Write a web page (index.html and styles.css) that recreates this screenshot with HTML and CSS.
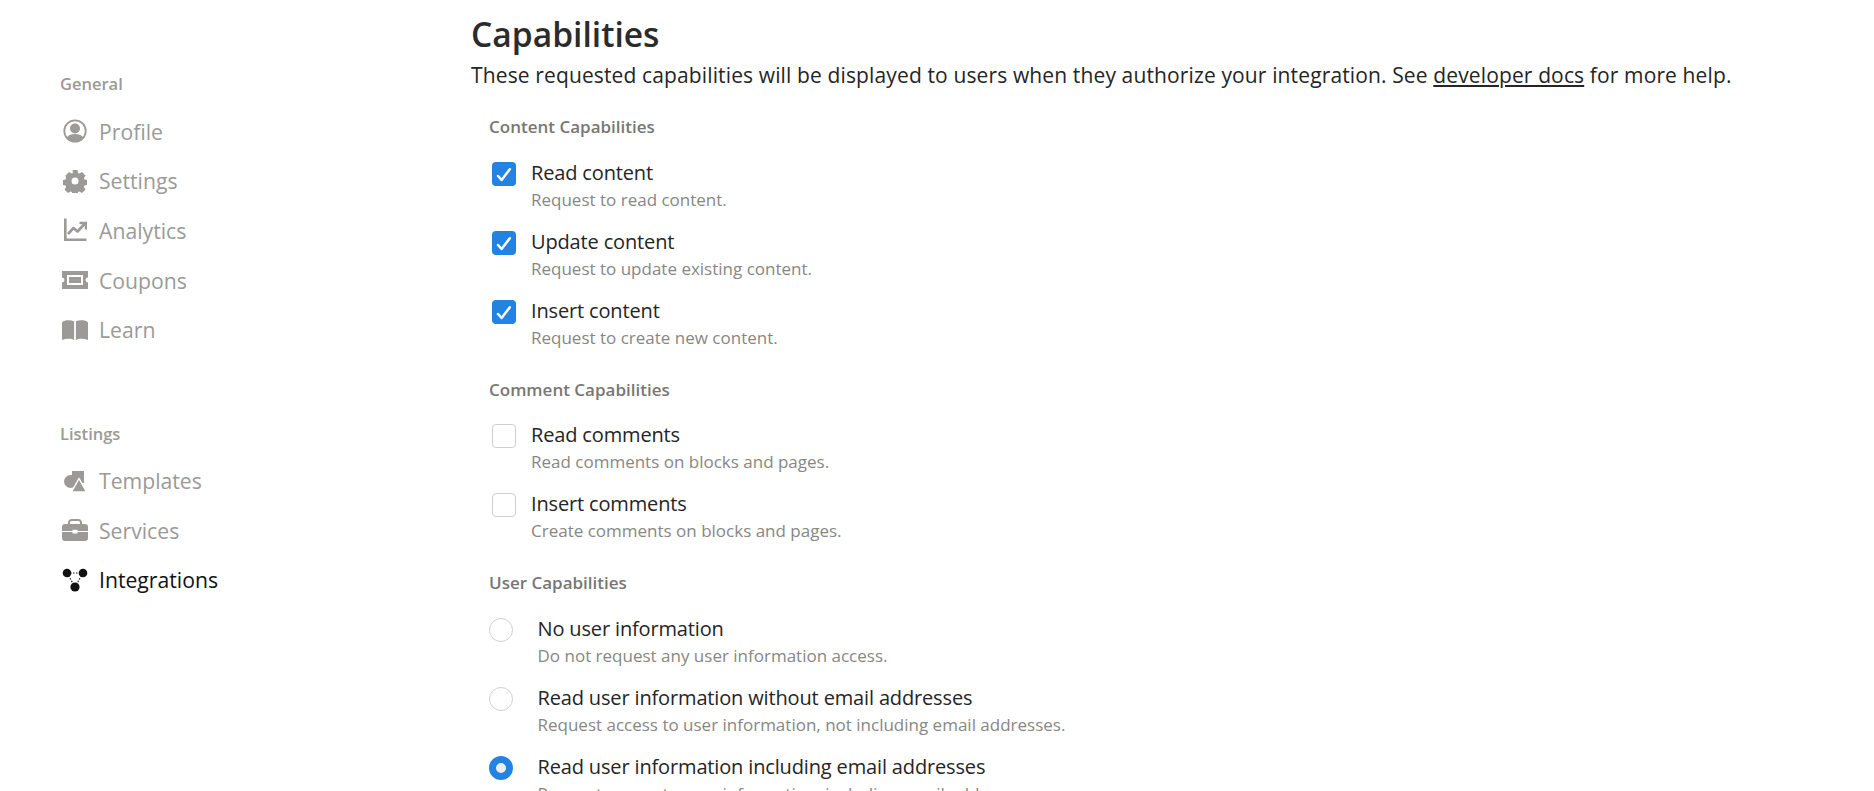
FILE: index.html
```html
<!DOCTYPE html>
<html lang="en">
<head>
<meta charset="utf-8">
<title>Capabilities</title>
<link rel="stylesheet" href="styles.css">
</head>
<body>
<div class="page">
  <aside class="sidebar">
    <div class="nav-title">General</div>
    <nav class="nav-list">
      <a class="nav-item"><svg class="nav-icon" viewBox="0 0 24 24"><circle cx="12" cy="12" r="10.700" fill="none" stroke="currentColor" stroke-width="1.800"/><circle cx="12" cy="9.500" r="5" fill="currentColor"/><path fill="currentColor" d="M3.800 18.500C5.500 15.800 8.500 15 12 15s6.500.8 8.200 3.500A10.500 10.500 0 0 1 12 22.500a10.500 10.500 0 0 1-8.200-4z"/></svg>Profile</a>
      <a class="nav-item"><svg class="nav-icon" viewBox="0 0 24 24"><path fill="currentColor" fill-rule="evenodd" d="M9.500 1h5l.6 3 1.300.6 2.600-1.600 3.500 3.500-1.600 2.600.6 1.300 3 .6v5l-3 .6-.6 1.300 1.600 2.600-3.500 3.500-2.600-1.600-1.300.6-.6 3h-5l-.6-3-1.300-.6-2.600 1.600-3.500-3.500 1.600-2.600-.6-1.300-3-.6v-5l3-.6.6-1.300L2.500 6.500 6 3l2.600 1.600 1.300-.6zM12 8.500a3.500 3.500 0 1 0 0 7 3.500 3.500 0 0 0 0-7z"/></svg>Settings</a>
      <a class="nav-item"><svg class="nav-icon" viewBox="0 0 24 24"><path fill="none" stroke="currentColor" stroke-width="2.600" d="M2.300 .5V21.700h21.200"/><path fill="none" stroke="currentColor" stroke-width="2.600" stroke-linejoin="round" d="M5 16l5.500-6 4 3.500 7.500-8"/><path fill="none" stroke="currentColor" stroke-width="2.400" d="M16.500 5H23v6.500"/></svg>Analytics</a>
      <a class="nav-item"><svg class="nav-icon wide" viewBox="0 0 26 18"><path fill="currentColor" fill-rule="evenodd" d="M0 0h26v6.500a2.500 2.500 0 0 0 0 5V18H0v-6.500a2.500 2.500 0 0 0 0-5zM5 4v10h16V4z"/><rect x="7" y="6" width="12" height="6" fill="currentColor"/></svg>Coupons</a>
      <a class="nav-item"><svg class="nav-icon wide" viewBox="0 0 26 20"><path fill="currentColor" d="M1 1.500C3.500 0 8.500-.3 12.100 1.300V20C9 18.300 4 18.300 0 20V3a2 2 0 0 1 1-1.500zM25 1.500C22.500 0 17.500-.3 13.900 1.300V20C17 18.300 22 18.300 26 20V3a2 2 0 0 0-1-1.500z"/></svg>Learn</a>
    </nav>
    <div class="nav-title second">Listings</div>
    <nav class="nav-list compact">
      <a class="nav-item"><svg class="nav-icon" viewBox="0 0 24 24"><rect x="9" y="2" width="12" height="12" fill="currentColor"/><circle cx="7.500" cy="12.500" r="6.500" fill="currentColor"/><path fill="currentColor" stroke="#fff" stroke-width="1.500" stroke-linejoin="round" d="M16 9.500L23.500 23H8.500z"/></svg>Templates</a>
      <a class="nav-item"><svg class="nav-icon wide" viewBox="0 0 26 22"><path fill="none" stroke="currentColor" stroke-width="2" d="M7 6V3.500A2.500 2.500 0 0 1 9.500 1h7A2.500 2.500 0 0 1 19 3.500V6"/><path fill="currentColor" d="M3 5h20a3 3 0 0 1 3 3v4H15.500v-1.300h-5V12H0V8a3 3 0 0 1 3-3z"/><path fill="currentColor" d="M0 13h10.500v1.500h5V13H26v6a3 3 0 0 1-3 3H3a3 3 0 0 1-3-3z"/></svg>Services</a>
      <a class="nav-item active"><svg class="nav-icon wide" viewBox="0 0 26 24"><path fill="none" stroke="currentColor" stroke-width="1.100" stroke-dasharray="1.500 1.500" d="M5 5h16M5 5l8 14M21 5l-8 14"/><circle cx="5" cy="5" r="4.300" fill="currentColor"/><circle cx="21" cy="5" r="4.300" fill="currentColor"/><circle cx="13" cy="19" r="4.600" fill="currentColor"/></svg>Integrations</a>
    </nav>
  </aside>
  <main class="main">
    <h1 class="title">Capabilities</h1>
    <p class="lead">These requested capabilities will be displayed to users when they authorize your integration. See <a class="link">developer docs</a> for more help.</p>
    <section class="group">
      <h2 class="group-title">Content Capabilities</h2>
      <div class="option"><span class="box checked"><svg viewBox="0 0 24 24"><path d="M6 14l3.600 4L17.800 7.300" fill="none" stroke="#fff" stroke-width="2.500" stroke-linecap="round" stroke-linejoin="round"/></svg></span><div><div class="opt-label">Read content</div><div class="opt-desc">Request to read content.</div></div></div>
      <div class="option"><span class="box checked"><svg viewBox="0 0 24 24"><path d="M6 14l3.600 4L17.800 7.300" fill="none" stroke="#fff" stroke-width="2.500" stroke-linecap="round" stroke-linejoin="round"/></svg></span><div><div class="opt-label">Update content</div><div class="opt-desc">Request to update existing content.</div></div></div>
      <div class="option"><span class="box checked"><svg viewBox="0 0 24 24"><path d="M6 14l3.600 4L17.800 7.300" fill="none" stroke="#fff" stroke-width="2.500" stroke-linecap="round" stroke-linejoin="round"/></svg></span><div><div class="opt-label">Insert content</div><div class="opt-desc">Request to create new content.</div></div></div>
    </section>
    <section class="group">
      <h2 class="group-title">Comment Capabilities</h2>
      <div class="option"><span class="box"></span><div><div class="opt-label">Read comments</div><div class="opt-desc">Read comments on blocks and pages.</div></div></div>
      <div class="option"><span class="box"></span><div><div class="opt-label">Insert comments</div><div class="opt-desc">Create comments on blocks and pages.</div></div></div>
    </section>
    <section class="group">
      <h2 class="group-title">User Capabilities</h2>
      <div class="option radio-option"><span class="radio"></span><div><div class="opt-label">No user information</div><div class="opt-desc">Do not request any user information access.</div></div></div>
      <div class="option radio-option"><span class="radio"></span><div><div class="opt-label">Read user information without email addresses</div><div class="opt-desc">Request access to user information, not including email addresses.</div></div></div>
      <div class="option radio-option"><span class="radio on"></span><div><div class="opt-label">Read user information including email addresses</div><div class="opt-desc">Request access to user information, including email addresses.</div></div></div>
    </section>
  </main>
</div>
</body>
</html>
```

FILE: styles.css
```css
* { box-sizing: border-box; }
html, body { margin: 0; height: 100%; overflow: hidden; background: #fff; }
body { font-family: "Open Sans", "Noto Sans", sans-serif; color: #252525; }
.page { display: flex; height: 791px; overflow: hidden; }
.sidebar { width: 471px; flex: none; padding: 73px 0 0 60px; }
.nav-title { font-size: 16.500px; line-height: 21px; font-weight: 600; color: #9b9a97; }
.nav-title.second { margin-top: 69px; }
.nav-list { display: flex; flex-direction: column; margin-top: 12.500px; }
.nav-list.compact { margin-top: 11.500px; }
.nav-item { display: flex; align-items: center; gap: 12px; height: 49.600px; padding-left: 3px; font-size: 21.200px; color: #9b9a97; }
.nav-item.active { color: #111; }
.nav-icon { width: 24px; height: 24px; flex: none; }
.nav-icon.wide { width: 26px; margin: 0 -1px; }
.main { flex: 1; min-width: 0; }
.title { margin: 13px 0 0; font-size: 33.600px; line-height: 42px; font-weight: 600; color: #2b2b2b; }
.lead { margin: 5px 0 25px; font-size: 21px; line-height: 30px; color: #252525; letter-spacing: 0.130px; }
.link { text-decoration: underline; }
.group { padding-left: 18px; }
.group-title { margin: 12px 0 0; font-size: 17px; line-height: 24px; font-weight: 600; color: #787774; }
.option { display: flex; align-items: flex-start; gap: 15px; height: 69px; padding-left: 3px; }
.group-title + .option { margin-top: 19.500px; }
.box { width: 24px; height: 24px; margin-top: 3px; flex: none; border: 1px solid #d0d0d0; border-radius: 4px; }
.box.checked { background: #2383e2; border: none; }
.box svg { display: block; width: 24px; height: 24px; }
.opt-label { font-size: 20px; line-height: 27px; color: #252525; letter-spacing: -0.150px; white-space: nowrap; }
.opt-desc { margin-top: 3px; font-size: 17px; line-height: 21px; color: #888784; white-space: nowrap; }
.radio-option { padding-left: 0; gap: 24.500px; }
.radio { width: 24px; height: 24px; margin-top: 3px; flex: none; border: 1px solid #d0d0d0; border-radius: 50%; }
.radio.on { border: 7px solid #2383e2; background: #eee; }
```
